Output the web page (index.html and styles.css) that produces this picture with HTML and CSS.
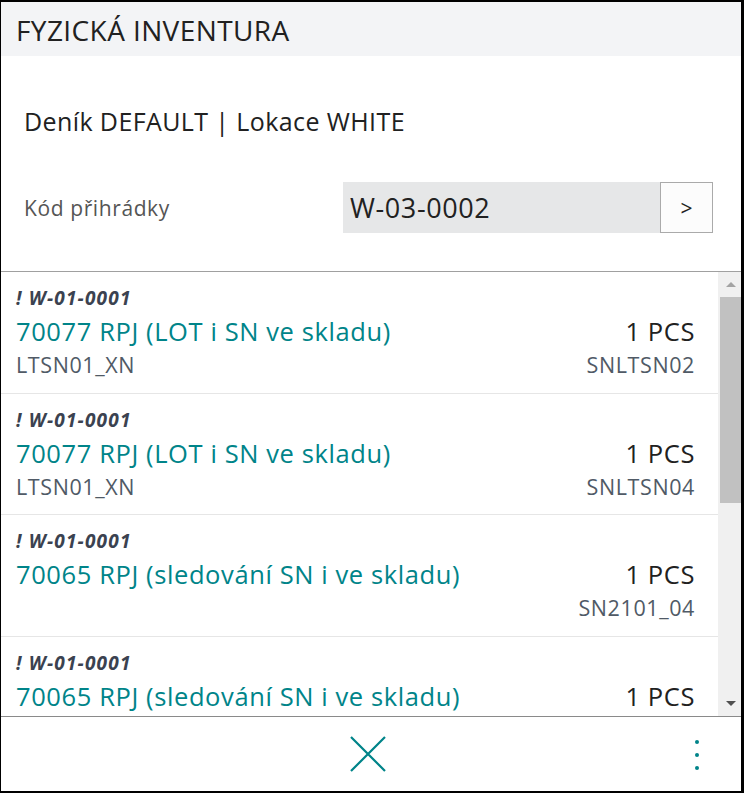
FILE: index.html
```html
<!DOCTYPE html>
<html lang="cs">
<head>
  <meta charset="UTF-8" />
  <meta name="viewport" content="width=device-width, initial-scale=1.0"/>
  <title>Fyzická inventura</title>
  <link rel="stylesheet" href="styles.css">
</head>
<body>

<div class="frame">
  <header>
    <h1>FYZICKÁ INVENTURA</h1>
  </header>

  <section class="info">
    <p class="journal">Deník DEFAULT | Lokace WHITE</p>
    <div class="bin-row">
      <label for="bin">Kód přihrádky</label>
      <div class="bin-field">
        <input type="text" id="bin" value="W-03-0002" />
        <button>&gt;</button>
      </div>
    </div>
  </section>

  <div class="list-wrap">
    <div class="list">
      <div class="item">
        <div class="code">! W-01-0001</div>
        <div class="line"><span class="name">70077 RPJ (LOT i SN ve skladu)</span><span class="qty">1 PCS</span></div>
        <div class="line sub"><span>LTSN01_XN</span><span>SNLTSN02</span></div>
      </div>
      <div class="item">
        <div class="code">! W-01-0001</div>
        <div class="line"><span class="name">70077 RPJ (LOT i SN ve skladu)</span><span class="qty">1 PCS</span></div>
        <div class="line sub"><span>LTSN01_XN</span><span>SNLTSN04</span></div>
      </div>
      <div class="item">
        <div class="code">! W-01-0001</div>
        <div class="line"><span class="name">70065 RPJ (sledování SN i ve skladu)</span><span class="qty">1 PCS</span></div>
        <div class="line sub"><span></span><span>SN2101_04</span></div>
      </div>
      <div class="item">
        <div class="code">! W-01-0001</div>
        <div class="line"><span class="name">70065 RPJ (sledování SN i ve skladu)</span><span class="qty">1 PCS</span></div>
        <div class="line sub"><span></span><span>SN2101_05</span></div>
      </div>
    </div>
    <div class="scrollbar">
      <div class="arrow up"></div>
      <div class="track"><div class="thumb"></div></div>
      <div class="arrow down"></div>
    </div>
  </div>

  <footer>
    <button class="close-btn" aria-label="Zavřít">
      <svg width="36" height="36" viewBox="0 0 36 36"><path d="M1 1 L35 35 M35 1 L1 35" stroke="#008489" stroke-width="2.2" fill="none"/></svg>
    </button>
    <button class="more-btn" aria-label="Více">
      <svg width="6" height="32" viewBox="0 0 6 32"><circle cx="3" cy="3" r="2"/><circle cx="3" cy="16" r="2"/><circle cx="3" cy="29" r="2"/></svg>
    </button>
  </footer>
</div>

</body>
</html>
```

FILE: styles.css
```css
* {
  box-sizing: border-box;
}
body {
  margin: 0;
  font-family: 'Open Sans', 'Noto Sans', sans-serif;
  background: #fff;
  color: #212121;
}
.frame {
  width: 744px;
  height: 793px;
  border-style: solid;
  border-color: #000;
  border-width: 2px 3px 2px 1px;
  display: flex;
  flex-direction: column;
  overflow: hidden;
}
header {
  background: #f3f4f6;
  height: 54px;
  display: flex;
  align-items: center;
  padding-left: 15px;
  padding-top: 1px;
}
header h1 {
  margin: 0;
  font-size: 28px;
  letter-spacing: 0.4px;
  font-weight: 400;
  color: #212121;
}
.info {
  padding: 48px 28px 38px 23px;
  border-bottom: 1px solid #a0a0a0;
}
.journal {
  margin: 0;
  font-size: 25px;
  letter-spacing: 0.4px;
  line-height: 34px;
}
.bin-row {
  margin-top: 44px;
  display: flex;
  align-items: center;
}
.bin-row label {
  flex: 1;
  font-size: 21px;
  letter-spacing: 0.6px;
  color: #555;
}
.bin-field {
  display: flex;
  height: 51px;
}
.bin-field input {
  width: 317px;
  border: none;
  background: #e6e7e8;
  font-family: inherit;
  font-size: 27px;
  letter-spacing: 0.6px;
  color: #212121;
  padding: 0 7px;
  outline: none;
}
.bin-field button {
  width: 53px;
  background: #fcfcfc;
  border: 1px solid #aaa;
  font-family: inherit;
  font-size: 21px;
  color: #212121;
}
.list-wrap {
  flex: 1;
  display: flex;
  min-height: 0;
  border-bottom: 1px solid #8a8a8a;
}
.list {
  flex: 1;
  overflow: hidden;
}
.item {
  padding: 14px 23px 10.5px 15px;
  border-bottom: 1px solid #e6e6e6;
}
.code {
  font-size: 19px;
  letter-spacing: 1.2px;
  font-weight: 700;
  font-style: italic;
  line-height: 24px;
  color: #3b4250;
}
.line {
  display: flex;
  justify-content: space-between;
  line-height: 34px;
  font-size: 25.5px;
  letter-spacing: 0.6px;
}
.code + .line {
  margin-top: 4px;
}
.name {
  color: #008489;
}
.qty {
  color: #212121;
}
.sub {
  font-size: 21.5px;
  color: #505a66;
}
.scrollbar {
  width: 23px;
  background: #f0f0f0;
  display: flex;
  flex-direction: column;
  padding-left: 2px;
}
.arrow {
  height: 25px;
  display: flex;
  align-items: center;
  justify-content: center;
}
.arrow::before {
  content: "";
  border-left: 5px solid transparent;
  border-right: 5px solid transparent;
}
.arrow.up::before {
  border-bottom: 5px solid #a3a3a3;
}
.arrow.down::before {
  border-top: 5px solid #505050;
}
.track {
  flex: 1;
}
.thumb {
  height: 206px;
  background: #c1c1c1;
}
footer {
  height: 74px;
  display: flex;
  align-items: center;
  justify-content: center;
  position: relative;
}
footer button {
  background: none;
  border: none;
  padding: 0;
  cursor: pointer;
}
.close-btn {
  margin-right: 6px;
}
.close-btn svg {
  display: block;
}
.more-btn {
  position: absolute;
  right: 41px;
  top: 22px;
}
.more-btn svg {
  display: block;
  fill: #008489;
}
```
